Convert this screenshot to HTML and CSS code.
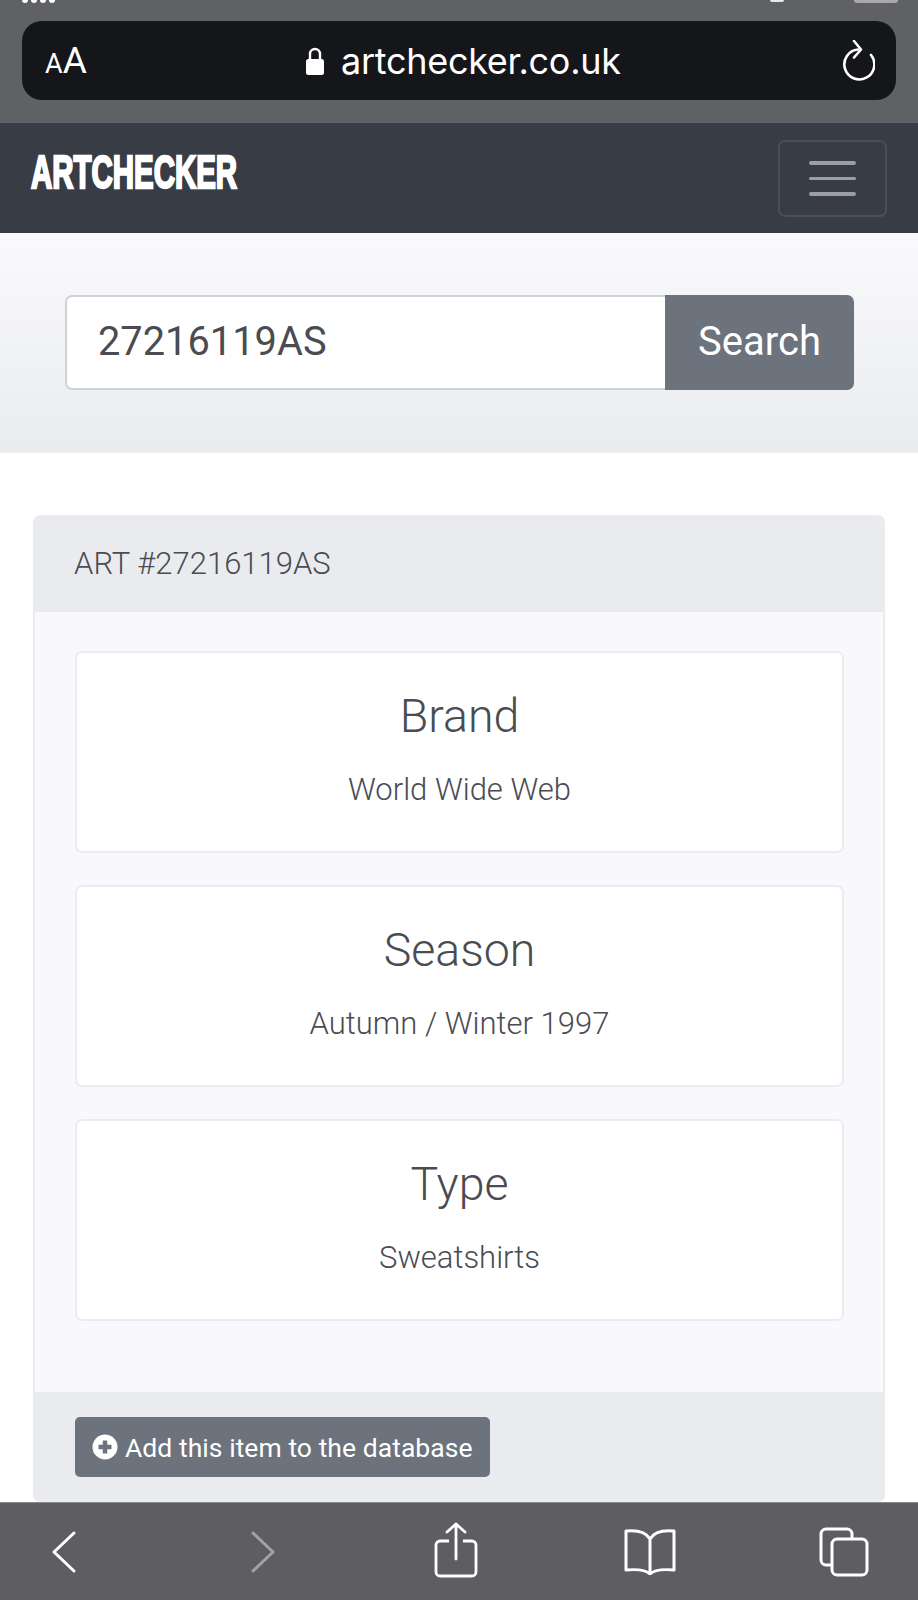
FILE: index.html
```html
<!DOCTYPE html>
<html lang="en">
<head>
    <meta charset="UTF-8">
    <meta name="viewport" content="width=device-width, initial-scale=1.0">
    <title>Artchecker</title>
    <link rel="stylesheet" href="styles.css">
</head>
<body>
    <div class="safari-top">
        <div class="status-bits">
            <div class="status-left"><i></i><i></i><i></i><i></i></div>
            <div class="status-right"><i></i><b></b></div>
        </div>
        <div class="url-bar">
            <div class="url-aa"><span class="small-a">A</span>A</div>
            <div class="url-address">
                <svg class="lock" width="20" height="30" viewBox="0 0 20 30">
                    <path d="M5 14V8a5 5 0 0 1 10 0v6" fill="none" stroke="#fff" stroke-width="2.4"/>
                    <rect x="1" y="13" width="18" height="16" rx="2.5" fill="#fff"/>
                </svg>
                <span>artchecker.co.uk</span>
            </div>
            <svg class="reload" width="36" height="42" viewBox="0 0 36 42">
                <path d="M19 9.500A15 15 0 1 0 32 15" fill="none" stroke="#fff" stroke-width="2.6" stroke-linecap="round"/>
                <path d="M15 1l7 8.500-7 8" fill="none" stroke="#fff" stroke-width="2.600" stroke-linecap="round" stroke-linejoin="round"/>
            </svg>
        </div>
    </div>

    <nav class="navbar">
        <div class="brand">ARTCHECKER</div>
        <div class="toggler">
            <span></span><span></span><span></span>
        </div>
    </nav>

    <section class="search-band">
        <div class="search-group">
            <div class="search-input">27216119AS</div>
            <div class="search-btn">Search</div>
        </div>
    </section>

    <main class="content">
        <div class="art-card">
            <div class="art-header">ART #27216119AS</div>
            <div class="art-body">
                <div class="info-box">
                    <div class="info-title">Brand</div>
                    <div class="info-value">World Wide Web</div>
                </div>
                <div class="info-box">
                    <div class="info-title">Season</div>
                    <div class="info-value">Autumn / Winter 1997</div>
                </div>
                <div class="info-box">
                    <div class="info-title">Type</div>
                    <div class="info-value">Sweatshirts</div>
                </div>
            </div>
            <div class="art-footer">
                <div class="add-btn">
                    <svg width="26" height="26" viewBox="0 0 26 26">
                        <circle cx="13" cy="13" r="12.500" fill="#fff"/>
                        <path d="M13 6.500v13M6.500 13h13" stroke="#6c737c" stroke-width="4.500"/>
                    </svg>
                    <span>Add this item to the database</span>
                </div>
            </div>
        </div>
    </main>

    <div class="safari-bottom">
        <svg class="tool-back" width="28" height="44" viewBox="0 0 28 44">
            <path d="M24 3L4 22l20 19" fill="none" stroke="#fff" stroke-width="3" stroke-linecap="round" stroke-linejoin="round"/>
        </svg>
        <svg class="tool-forward" width="28" height="44" viewBox="0 0 28 44">
            <path d="M4 3l20 19L4 41" fill="none" stroke="#a3a3a5" stroke-width="3" stroke-linecap="round" stroke-linejoin="round"/>
        </svg>
        <svg class="tool-share" width="44" height="56" viewBox="0 0 44 56">
            <path d="M15 19H6a4 4 0 0 0-4 4v27a4 4 0 0 0 4 4h32a4 4 0 0 0 4-4V23a4 4 0 0 0-4-4h-9" fill="none" stroke="#fff" stroke-width="2.800"/>
            <path d="M22 37V2M13 10l9-8 9 8" fill="none" stroke="#fff" stroke-width="2.800" stroke-linecap="round" stroke-linejoin="round"/>
        </svg>
        <svg class="tool-book" width="54" height="46" viewBox="0 0 54 46">
            <path d="M27 10C23 3 14 1 3 2v39c11-1 20 0 24 4 4-4 13-5 24-4V2C40 1 31 3 27 10zM27 10v35" fill="none" stroke="#fff" stroke-width="3" stroke-linejoin="round"/>
        </svg>
        <svg class="tool-tabs" width="50" height="50" viewBox="0 0 50 50">
            <path d="M12 38H7a5 5 0 0 1-5-5V7a5 5 0 0 1 5-5h21a5 5 0 0 1 5 5v5" fill="none" stroke="#fff" stroke-width="3"/>
            <rect x="13" y="12" width="35" height="36" rx="5" fill="none" stroke="#fff" stroke-width="3"/>
        </svg>
    </div>
</body>
</html>
```

FILE: styles.css
```css
* {
    box-sizing: border-box;
}
body {
    margin: 0;
    height: 1600px;
    overflow: hidden;
    display: flex;
    flex-direction: column;
    font-family: Roboto, "Liberation Sans", sans-serif;
    background: #fff;
    color: #4a4c52;
}

/* browser chrome, top */
.safari-top {
    height: 123px;
    background: #606165;
    padding: 0 22px;
    flex-shrink: 0;
}
.status-bits {
    height: 21px;
    display: flex;
    justify-content: space-between;
    align-items: flex-start;
}
.status-left {
    display: flex;
    gap: 3px;
}
.status-left i {
    width: 6px;
    height: 3px;
    background: #fff;
    border-radius: 0 0 3px 3px;
}
.status-right {
    display: flex;
    gap: 70px;
    margin-right: -2px;
}
.status-right i {
    width: 14px;
    height: 2px;
    background: #e8e8e8;
    border-radius: 0 0 8px 8px;
}
.status-right b {
    width: 44px;
    height: 3px;
    background: #a9a9ac;
    border-radius: 0 0 3px 3px;
}
.url-bar {
    height: 79px;
    background: #15161a;
    border-radius: 20px;
    display: flex;
    align-items: center;
    justify-content: space-between;
    padding: 0 21px 0 23px;
    color: #fff;
}
.url-aa {
    font-family: Roboto, sans-serif;
    font-size: 37px;
    font-weight: 400;
    line-height: 1;
}
.small-a {
    font-size: 27px;
}
.url-address {
    display: flex;
    align-items: center;
    gap: 16px;
    font-family: Inter, sans-serif;
    font-size: 36px;
    font-weight: 400;
    letter-spacing: -0.3px;
}
.lock {
    display: block;
}

/* navbar */
.navbar {
    height: 110px;
    flex-shrink: 0;
    background: #383c45;
    display: flex;
    justify-content: space-between;
    align-items: flex-start;
    padding: 17px 31px;
}
.brand {
    font-family: "Liberation Sans", sans-serif;
    font-weight: 700;
    font-size: 46px;
    line-height: 64px;
    color: #fff;
    -webkit-text-stroke: 2.400px #fff;
    transform: scaleX(0.64);
    transform-origin: left center;
    white-space: nowrap;
}
.toggler {
    width: 109px;
    height: 77px;
    border: 2px solid #4a4e57;
    border-radius: 7px;
    display: flex;
    flex-direction: column;
    align-items: center;
    justify-content: center;
    gap: 12px;
}
.toggler span {
    display: block;
    width: 47px;
    height: 3.500px;
    border-radius: 2px;
    background: #9c9ea3;
}

/* search band */
.search-band {
    height: 220px;
    flex-shrink: 0;
    background: linear-gradient(#fafafc, #e9ebef);
    padding: 62px 64px 0 65px;
}
.search-group {
    display: flex;
    height: 95px;
}
.search-input {
    flex: 1;
    background: #fff;
    border: 2px solid #ced1d6;
    border-right: 0;
    border-radius: 7px 0 0 7px;
    padding-left: 31px;
    font-size: 39.800px;
    line-height: 90px;
    color: #4a4c52;
}
.search-btn {
    width: 189px;
    background: #6c737c;
    border-radius: 0 7px 7px 0;
    color: #fff;
    font-size: 40px;
    line-height: 94px;
    text-align: center;
}

/* card */
.content {
    flex: 1;
    min-height: 0;
    overflow: hidden;
    padding: 62px 33px 0;
}
.art-card {
    border-radius: 7px;
    background: #e9ebef;
    padding: 0 2px;
    height: 100%;
    display: flex;
    flex-direction: column;
}
.art-header {
    height: 97px;
    padding-left: 39px;
    font-size: 31px;
    font-weight: 300;
    line-height: 98px;
    color: #4a4c52;
}
.art-body {
    flex: 1;
    background: #f9f9fd;
    padding: 39px 39px 0 40px;
    display: flex;
    flex-direction: column;
    gap: 32px;
}
.info-box {
    height: 202px;
    background: #fff;
    border: 2px solid #ebecf0;
    border-radius: 7px;
    text-align: center;
    padding-top: 34px;
}
.info-title {
    font-size: 46.500px;
    font-weight: 300;
    line-height: 58px;
    color: #4a4c52;
}
.info-value {
    margin-top: 25px;
    font-size: 31px;
    font-weight: 300;
    line-height: 40px;
    color: #4a4c52;
}
.art-footer {
    height: 110px;
    padding: 25px 40px 0;
}
.add-btn {
    width: 415px;
    height: 60px;
    background: #6c737c;
    border-radius: 5px;
    color: #fff;
    display: flex;
    align-items: center;
    gap: 7px;
    padding-left: 17px;
    font-size: 26.500px;
    letter-spacing: 0.05px;
    white-space: nowrap;
}
.add-btn svg {
    display: block;
}

/* browser chrome, bottom */
.safari-bottom {
    height: 98px;
    flex-shrink: 0;
    background: #5e5d61;
    border-top: 1px solid #8a8a8c;
    display: flex;
    align-items: center;
    padding: 0 46px 0 50px;
}
.tool-back {
    margin-right: 171px;
}
.tool-forward {
    margin-right: 157px;
}
.tool-share {
    margin-right: 145px;
    margin-bottom: 4px;
}
.tool-book {
    margin-right: 142px;
}
```
